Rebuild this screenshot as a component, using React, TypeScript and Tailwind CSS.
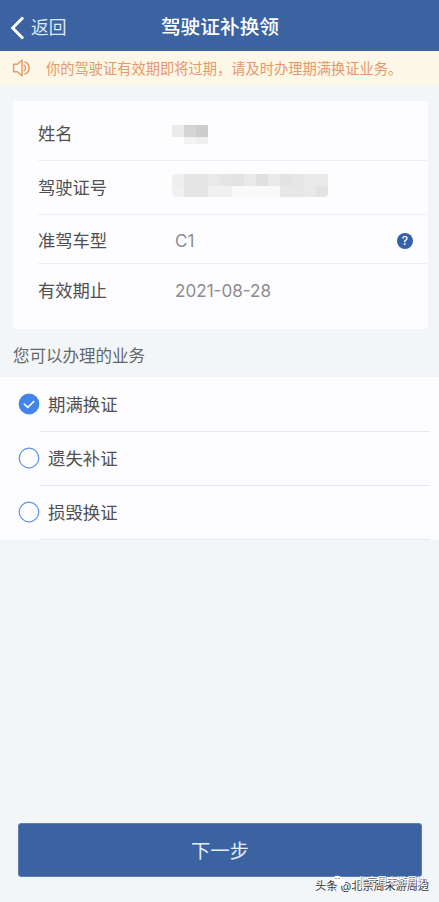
import { useState } from 'react';
import { clsx } from 'clsx';

const nameMosaic = [
  ['bg-[#ebebec]', 'bg-[#d4d4d5]', 'bg-[#cdcdce]'],
  ['bg-[#fdfdfe]', 'bg-[#f3f3f4]', 'bg-[#efeff0]'],
];

const licenseMosaic = [
  [
    'bg-[#efeff0]', 'bg-[#e5e5e6]', 'bg-[#e5e5e6]', 'bg-[#e9e9ea]', 'bg-[#e5e5e6]', 'bg-[#e3e3e4]', 'bg-[#e9e9ea]',
    'bg-[#e0e0e1]', 'bg-[#e9e9ea]', 'bg-[#e3e3e4]', 'bg-[#e7e7e8]', 'bg-[#e9e9ea]', 'bg-[#e9e9ea]',
  ],
  [
    'bg-[#f1f1f2]', 'bg-[#e5e5e6]', 'bg-[#e5e5e6]', 'bg-[#f0f0f1]', 'bg-[#f0f0f1]', 'bg-[#f9f9fa]', 'bg-[#f9f9fa]',
    'bg-[#f9f9fa]', 'bg-[#f9f9fa]', 'bg-[#e7e7e8]', 'bg-[#e7e7e8]', 'bg-[#e9e9ea]', 'bg-[#e3e3e4]',
  ],
];

const services = [
  { id: 'expired', label: '期满换证' },
  { id: 'lost', label: '遗失补证' },
  { id: 'damaged', label: '损毁换证' },
];

function SpeakerIcon() {
  return (
    <svg viewBox="0 0 20 20" className="h-5 w-5" fill="none" stroke="#e69566" strokeWidth="1.4" strokeLinejoin="round">
      <path d="M1.6 6.2h3.6L10 2.2v15.6l-4.8-4H1.6z" />
      <path d="M12.2 7.2c1.8 1.3 1.8 4.3 0 5.6" strokeLinecap="round" />
      <path d="M13 4c5.4 2 5.4 10 0 12" strokeLinecap="round" />
    </svg>
  );
}

function Radio({ checked }: { checked: boolean }) {
  return (
    <svg viewBox="0 0 22 22" className="h-[22px] w-[22px] shrink-0" fill="none">
      <circle cx="11" cy="11" r="9.8" fill={checked ? '#4384ec' : '#fdfdff'} stroke={checked ? '#4384ec' : '#5c93ea'} strokeWidth="1.2" />
      {checked && <path d="M5.8 10.8l4 3.6 6.4-6.4" stroke="#fff" strokeWidth="1.5" />}
    </svg>
  );
}

function InfoRow({ label, className, children }: { label: string; className: string; children: React.ReactNode }) {
  return (
    <div className={clsx('flex items-center border-[#eeeff1]', className)}>
      <span className="w-[137px] shrink-0 text-[17.3px] text-[#505052]">{label}</span>
      {children}
    </div>
  );
}

export default function App() {
  const [selected, setSelected] = useState('expired');

  return (
    <div className="flex h-[902px] w-[439px] flex-col overflow-hidden bg-[#f2f6f9] font-['Inter','Noto_Sans_CJK_SC',sans-serif] leading-none">
      {/* Header */}
      <header className="grid h-[51px] shrink-0 grid-cols-[1fr_auto_1fr] items-center bg-[#3b63a2] pt-1 text-white">
        <button className="flex items-center pl-[10px] text-[17.8px] text-[#dce8fb]">
          <svg viewBox="0 0 15 24" className="mr-[6px] h-6 w-[15px]" fill="none" stroke="#fff" strokeWidth="3">
            <path d="M13 1.5L2.7 12 13 22.5" />
          </svg>
          返回
        </button>
        <h1 className="pl-px text-[19.7px] font-medium">驾驶证补换领</h1>
      </header>

      {/* Notice */}
      <div className="flex h-[34px] shrink-0 items-center whitespace-nowrap bg-[#fdf7e7] pl-3 text-[14.25px] text-[#e6986c]">
        <SpeakerIcon />
        <span className="mt-[3px] ml-[14px]">你的驾驶证有效期即将过期，请及时办理期满换证业务。</span>
      </div>

      {/* License info */}
      <section className="mt-4 ml-[13px] h-[228px] w-[415px] shrink-0 rounded-[2px] bg-[#fdfdff] pl-[25px]">
        <InfoRow label="姓名" className="h-[60px] border-b pt-[6px]">
          <div className="mt-px -ml-[3px] grid grid-cols-[12px_12px_12px] grid-rows-[12px_7px]">
            {nameMosaic.flat().map((color, i) => (
              <span key={i} className={color} />
            ))}
          </div>
        </InfoRow>
        <InfoRow label="驾驶证号" className="h-[54px] border-b">
          <div className="-mt-[5px] -ml-[3px] grid grid-cols-[repeat(13,12px)] grid-rows-[12px_11px] overflow-hidden rounded-l-[4px] rounded-br-[4px]">
            {licenseMosaic.flat().map((color, i) => (
              <span key={i} className={color} />
            ))}
          </div>
        </InfoRow>
        <InfoRow label="准驾车型" className="h-[49px] border-b pt-[4px]">
          <span className="text-[17px] text-[#8c8c90]">C1</span>
          <span className="mr-[15px] ml-auto flex h-4 w-4 items-center justify-center rounded-full bg-[#355fa8] text-[12px] font-medium text-white">
            ?
          </span>
        </InfoRow>
        <InfoRow label="有效期止" className="h-[53px]">
          <span className="text-[17.1px] text-[#8c8c90]">2021-08-28</span>
        </InfoRow>
      </section>

      {/* Services */}
      <h2 className="flex h-12 shrink-0 items-center pt-[7px] pl-[13px] text-[16.5px] text-[#646669]">您可以办理的业务</h2>
      <section className="shrink-0 bg-[#fdfdff] pt-px">
        {services.map((item) => (
          <button key={item.id} onClick={() => setSelected(item.id)} className="flex h-[54px] w-full pl-[18px] text-left">
            <span className="flex h-full items-center pb-[2px]">
              <Radio checked={selected === item.id} />
            </span>
            <span className="mr-[9px] flex h-full flex-1 items-center border-b border-[#e6e9eb] pl-2 text-[17.4px] text-[#505052]">
              {item.label}
            </span>
          </button>
        ))}
      </section>

      {/* Submit */}
      <footer className="relative mt-auto h-[79px] shrink-0 px-[18px]">
        <button className="h-[54px] w-[404px] rounded-[3px] border border-[#5f7eae] bg-[#3b63a2] pt-[3px] text-[19.3px] text-[#e4eefc]">
          下一步
        </button>
        {/* Watermark, two layers of the account name */}
        <div className="absolute right-[10px] bottom-[10px] text-[11.1px] whitespace-nowrap text-[#38383a] [text-shadow:-1px_-1px_0_#fff]">
          头条 @北京周末游周边
        </div>
        <div className="absolute right-[12px] bottom-[15px] flex items-center text-[10px] whitespace-nowrap text-white [text-shadow:0.5px_0.5px_0_#666]">
          <svg viewBox="0 0 16 14" className="mr-[11px] h-3 w-3.5" fill="#fff">
            <ellipse cx="6" cy="5" rx="5" ry="4.2" />
            <ellipse cx="11" cy="9" rx="4.2" ry="3.5" />
            <circle cx="4.5" cy="4" r=".7" fill="#555" />
            <circle cx="8" cy="4" r=".7" fill="#555" />
          </svg>
          北京周末游周边
        </div>
      </footer>
    </div>
  );
}
